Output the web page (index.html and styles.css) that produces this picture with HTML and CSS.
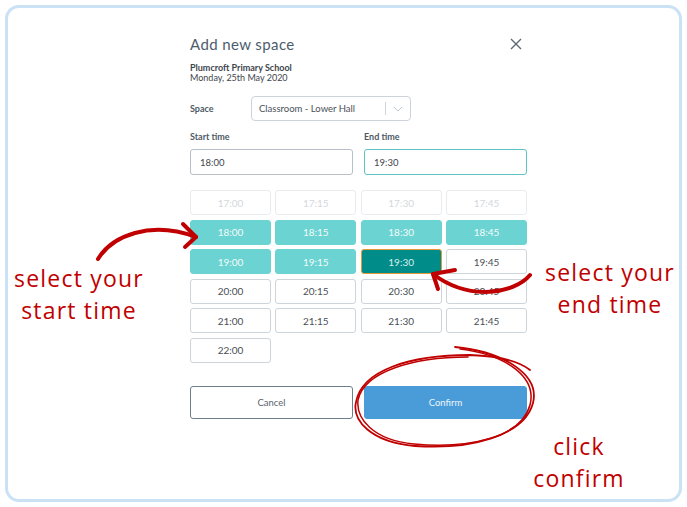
FILE: index.html
```html
<!DOCTYPE html>
<html lang="en">

<head>
    <meta charset="UTF-8">
    <meta name="viewport" content="width=device-width, initial-scale=1.0">
    <title>Add new space</title>
    <link rel="stylesheet" href="styles.css">
</head>

<body>
    <div id="frame">
        <div id="dialog">
            <div class="head">
                <h1>Add new space</h1>
                <svg class="close" width="12" height="12" viewBox="0 0 12 12">
                    <path d="M1 1 L11 11 M11 1 L1 11" stroke="#5b6772" stroke-width="1.4" fill="none" />
                </svg>
            </div>
            <p class="venue"><strong>Plumcroft Primary School</strong><br>Monday, 25th May 2020</p>

            <div class="space-row">
                <label>Space</label>
                <div class="select">
                    <span class="value">Classroom - Lower Hall</span>
                    <span class="sep"></span>
                    <svg width="10" height="6" viewBox="0 0 10 6">
                        <path d="M1 1 L5 5 L9 1" stroke="#c3c9cf" stroke-width="1" fill="none" />
                    </svg>
                </div>
            </div>

            <div class="times">
                <div class="field">
                    <label>Start time</label>
                    <div class="input">18:00</div>
                </div>
                <div class="field">
                    <label>End time</label>
                    <div class="input focus">19:30</div>
                </div>
            </div>

            <div class="slots">
                <div class="slot off">17:00</div>
                <div class="slot off">17:15</div>
                <div class="slot off">17:30</div>
                <div class="slot off">17:45</div>
                <div class="slot range">18:00</div>
                <div class="slot range">18:15</div>
                <div class="slot range">18:30</div>
                <div class="slot range">18:45</div>
                <div class="slot range">19:00</div>
                <div class="slot range">19:15</div>
                <div class="slot end">19:30</div>
                <div class="slot">19:45</div>
                <div class="slot">20:00</div>
                <div class="slot">20:15</div>
                <div class="slot">20:30</div>
                <div class="slot">20:45</div>
                <div class="slot">21:00</div>
                <div class="slot">21:15</div>
                <div class="slot">21:30</div>
                <div class="slot">21:45</div>
                <div class="slot">22:00</div>
            </div>

            <div class="actions">
                <button class="cancel">Cancel</button>
                <button class="confirm">Confirm</button>
            </div>
        </div>

        <!-- hand drawn notes on top -->
        <svg id="marks" width="687" height="507" viewBox="0 0 687 507">
            <g stroke="#c00000" fill="none" stroke-linecap="round" stroke-linejoin="round">
                <path d="M98 259 C112 236 150 220 196 237" stroke-width="4" />
                <path d="M183 224 L196 237 L185 247" stroke-width="4" />
                <path d="M530 275 C515 293 470 302 433 274" stroke-width="4" />
                <path d="M455 270 L433 274 L438 289" stroke-width="4" />
                <path d="M455 347 C505 352 540 375 533 403 C524 436 470 450 415 446 C370 442 352 420 356 402 C362 370 410 355 470 355 C500 356 520 362 530 370" stroke-width="1.8" />
                <path d="M460 349 C508 355 537 378 530 405 C521 438 468 449 414 444 C372 440 356 418 358 400 C364 372 412 357 468 357" stroke-width="1.5" />
            </g>
        </svg>
        <div class="note note-start">select your<br>start time</div>
        <div class="note note-end">select your<br>end time</div>
        <div class="note note-click">click<br>confirm</div>
    </div>
</body>

</html>
```

FILE: styles.css
```css
body {
    margin: 0;
    background-color: #fff;
    font-family: "Lato", "Open Sans", sans-serif;
}

#frame {
    position: relative;
    margin: 5px;
    height: 491px;
    border: 3px solid #cbe1f5;
    border-radius: 14px;
}

#dialog {
    width: 337px;
    margin-left: 182px;
    padding-top: 27px;
    color: #4a5058;
}

.head {
    display: flex;
    justify-content: space-between;
    align-items: center;
    height: 18px;
}

h1 {
    margin: 0;
    font-size: 15px;
    font-weight: 400;
    color: #4d5d6c;
    letter-spacing: 0.4px;
}

.close {
    margin-right: 5px;
}

.venue {
    margin: 10px 0 0 0;
    font-size: 9px;
    line-height: 10px;
    color: #3e454c;
}

.venue strong {
    font-weight: 700;
}

.space-row {
    display: flex;
    align-items: center;
    margin-top: 13px;
}

label {
    font-size: 9px;
    font-weight: 700;
    color: #4d5a66;
}

.space-row label {
    width: 61px;
}

.select {
    display: flex;
    align-items: center;
    width: 160px;
    height: 25px;
    box-sizing: border-box;
    border: 1px solid #ccd3da;
    border-radius: 4px;
    padding: 0 7px;
    font-size: 9.5px;
    color: #4a5058;
}

.select .value {
    flex: 1;
}

.select .sep {
    width: 1px;
    height: 13px;
    background-color: #cfd5db;
    margin-right: 7px;
}

.times {
    display: flex;
    gap: 11px;
    margin-top: 10px;
}

.field {
    flex: 1;
    display: grid;
    gap: 6px;
}

.field label {
    line-height: 12px;
}

.input {
    height: 26px;
    box-sizing: border-box;
    border: 1px solid #b7c0c8;
    border-radius: 3px;
    padding: 0 9px;
    display: flex;
    align-items: center;
    font-size: 9.5px;
    color: #3e454c;
}

.input.focus {
    border-color: #5fc3c3;
}

.slots {
    display: grid;
    grid-template-columns: repeat(4, 1fr);
    column-gap: 4.4px;
    row-gap: 4.6px;
    margin-top: 15px;
}

.slot {
    height: 25px;
    box-sizing: border-box;
    border: 1px solid #cdd4da;
    border-radius: 3px;
    display: flex;
    align-items: center;
    justify-content: center;
    font-size: 10px;
    color: #4a4f55;
}

.slot.off {
    color: #d3d8dd;
    border-color: #e8ecef;
}

.slot.range {
    background-color: #6bd3d1;
    border-color: #6bd3d1;
    color: #f3fbfb;
}

.slot.end {
    background-color: #008c89;
    border: 1px solid #e59a3a;
    color: #d8efee;
}

.actions {
    display: flex;
    gap: 11px;
    margin-top: 23px;
}

.actions button {
    flex: 1;
    height: 33px;
    border-radius: 3px;
    font-family: "Lato", "Open Sans", sans-serif;
    font-size: 9.5px;
}

.cancel {
    background-color: #fff;
    border: 1px solid #6f7e8b;
    color: #5a6470;
}

.confirm {
    background-color: #4a9cd9;
    border: 1px solid #4a9cd9;
    color: #eaf4fb;
}

#marks {
    position: absolute;
    left: -8px;
    top: -8px;
}

.note {
    position: absolute;
    text-align: center;
    font-family: "Open Sans", sans-serif;
    font-size: 23px;
    letter-spacing: 1.2px;
    line-height: 32px;
    color: #c00000;
}

.note-start {
    left: -8px;
    top: 254px;
    width: 158px;
}

.note-end {
    left: 525px;
    top: 248px;
    width: 154px;
}

.note-click {
    left: 505px;
    top: 422px;
    width: 132px;
}
```
